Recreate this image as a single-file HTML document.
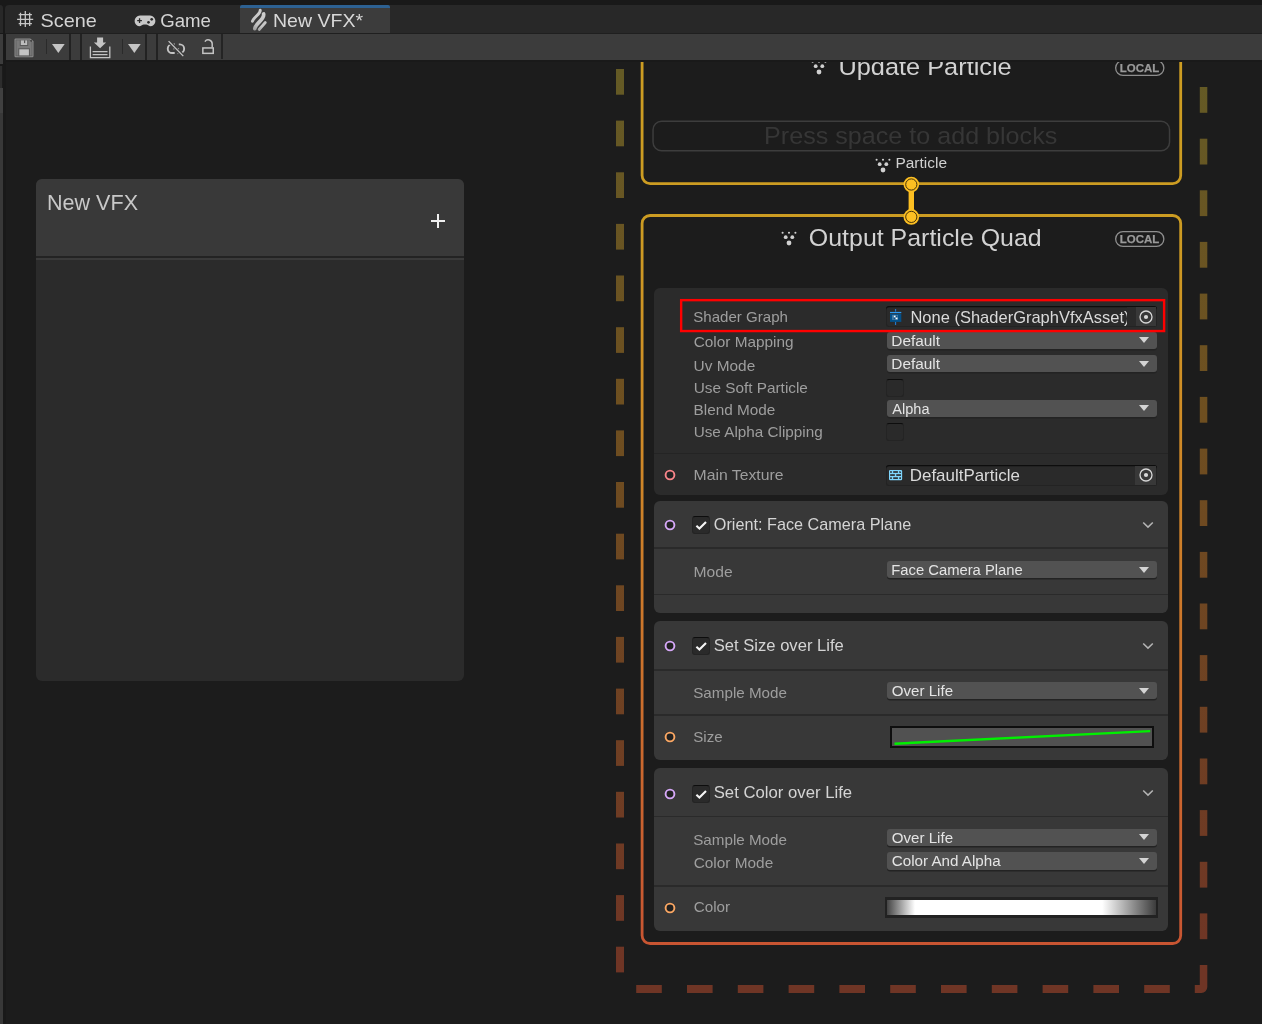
<!DOCTYPE html>
<html><head><meta charset="utf-8"><title>New VFX</title>
<style>
html,body{margin:0;padding:0;}
body{width:1262px;height:1024px;overflow:hidden;background:#1c1c1c;font-family:"Liberation Sans",sans-serif;position:relative;color:#d2d2d2;}
.a{position:absolute;}
.t{position:absolute;left:0;top:0;white-space:pre;line-height:1;transform-origin:0 0;}
.dd{position:absolute;left:886.7px;width:270px;height:17.2px;background:#525252;border-radius:3px;box-shadow:0 1.400px 0 #232323;}
.dd i{position:absolute;right:7.6px;top:5.4px;width:0;height:0;border-left:5.1px solid transparent;border-right:5.1px solid transparent;border-top:6.6px solid #d4d4d4;}
.cb{position:absolute;width:15.8px;height:15.8px;background:#2a2a2a;border:1px solid #242424;border-top-color:#0d0d0d;border-radius:3px;}
.blk{position:absolute;left:653.9px;width:514.4px;background:#383838;border-radius:6px;}
.sep{position:absolute;left:0;width:100%;height:1.6px;background:#2a2a2a;}
.obj{position:absolute;left:886.4px;width:270.3px;height:21.2px;background:#2a2a2a;border-radius:3px;box-shadow:inset 0 1.2px 0 #0d0d0d, inset 0 0 0 1px #232323;overflow:hidden;}
.obj b{position:absolute;right:1px;top:1px;width:21px;height:19.2px;background:#383838;}
</style></head><body>
<div class="a" style="left:0;top:0;width:1262px;height:1024px;overflow:hidden;will-change:transform">

<div class="a" style="left:0;top:0;width:1262px;height:34px;background:#191919"></div>
<div class="a" style="left:0;top:5px;width:3px;height:28px;background:#282828;border-top-right-radius:3px"></div>
<div class="a" style="left:0;top:34px;width:3px;height:30px;background:#3c3c3c"></div>
<div class="a" style="left:0;top:64px;width:3px;height:2px;background:#191919"></div>
<div class="a" style="left:0;top:66px;width:2.2px;height:22px;background:#2d2d2d"></div>
<div class="a" style="left:0;top:88px;width:3px;height:25px;background:#404040"></div>
<div class="a" style="left:0;top:113px;width:3px;height:911px;background:#383838"></div>
<div class="a" style="left:3px;top:34px;width:2.800px;height:990px;background:#191919"></div>
<div class="a" style="left:5px;top:5px;width:1257px;height:27.5px;background:#282828;border-top-left-radius:4px"></div>
<div class="a" style="left:239.7px;top:5px;width:149.9px;height:27.5px;background:#3c3c3c;border-top:3px solid #2d6192;box-sizing:border-box;border-radius:2px 2px 0 0"></div>
<div class="t" style="transform:translate(40.61px,10.78px) scaleX(1.0428);font-size:19.04px;color:#d4d4d4;">Scene</div>
<div class="t" style="transform:translate(160.13px,10.78px) scaleX(0.9794);font-size:19.04px;color:#d4d4d4;">Game</div>
<div class="t" style="transform:translate(273.02px,10.78px) scaleX(1.0254);font-size:19.04px;color:#d8d8d8;">New VFX*</div>
<svg class="a" style="left:16px;top:9px" width="20" height="20" viewBox="16 9 20 20"><g stroke="#c6c6c6" stroke-width="1.300" fill="none">
<path d="M20.500 12.700V25.900M25.300 11.100V27.100M29.650 12.700V25.900M18.700 14.650H31.900M17.100 19.300H33.200M18.700 23.650H31.900"/></g></svg>
<svg class="a" style="left:133px;top:14px" width="24" height="14" viewBox="133 14 24 14"><path fill="#c8c8c8" d="M139.900 15.600H150.100A5.300 5.300 0 0 1 155.400 20.900A5.300 5.300 0 0 1 150.100 26.200C148.500 26.200 147.800 24.600 146.200 24.600H143.800C142.200 24.600 141.500 26.200 139.900 26.200A5.300 5.300 0 0 1 134.600 20.900A5.300 5.300 0 0 1 139.900 15.600z"/>
<path stroke="#2a2a2a" stroke-width="1.300" d="M139.550 18.200v4.700M137.200 20.550h4.700"/><circle cx="151.700" cy="19.300" r="1.350" fill="#2a2a2a"/><circle cx="148.500" cy="22.300" r="1.350" fill="#2a2a2a"/></svg>
<svg class="a" style="left:248px;top:6px" width="22" height="27" viewBox="248 6 22 27"><defs><linearGradient id="fg" gradientUnits="userSpaceOnUse" x1="262" y1="9" x2="253" y2="30"><stop offset="0" stop-color="#d0d0d0"/><stop offset="0.7" stop-color="#c4c4c4"/><stop offset="1" stop-color="#9a9a9a"/></linearGradient></defs>
<g fill="none" stroke="url(#fg)" stroke-linecap="round"><path d="M260.200 10.300C260.600 14.200 253.600 17 252.500 21.200" stroke-width="3"/><path d="M263.600 14C264.800 19.500 255.600 23 254.800 28.600" stroke-width="3.700"/><path d="M265.300 22.500L259.200 29.500" stroke-width="2.800"/></g></svg>
<div class="a" style="left:5px;top:32.5px;width:1257px;height:1.5px;background:#1f1f1f"></div>
<div class="a" style="left:6px;top:34px;width:1256px;height:26px;background:#3c3c3c"></div>
<div class="a" style="left:5.5px;top:60px;width:1257px;height:2px;background:#191919"></div>
<div class="a" style="left:69px;top:34px;width:2px;height:26px;background:#222"></div>
<div class="a" style="left:80.2px;top:34px;width:2px;height:26px;background:#222"></div>
<div class="a" style="left:145px;top:34px;width:2px;height:26px;background:#222"></div>
<div class="a" style="left:156px;top:34px;width:2px;height:26px;background:#222"></div>
<div class="a" style="left:221.2px;top:34px;width:1.6px;height:24.8px;background:#242424"></div>
<div class="a" style="left:46.2px;top:39.2px;width:1px;height:14.6px;background:#2a2a2a"></div>
<div class="a" style="left:122.2px;top:39.2px;width:1px;height:14.6px;background:#2a2a2a"></div>
<svg class="a" style="left:51.7px;top:43.9px" width="13" height="10" viewBox="0 0 13 10"><path fill="#c4c4c4" d="M0 0H12.700L6.350 9.100z"/></svg>
<svg class="a" style="left:127.6px;top:43.9px" width="13" height="10" viewBox="0 0 13 10"><path fill="#c4c4c4" d="M0 0H12.700L6.350 9.100z"/></svg>
<svg class="a" style="left:14px;top:38px" width="20" height="20" viewBox="14 38 20 20"><path d="M15.700 38.400H30.300L33.500 41.300V56.100a1.200 1.200 0 0 1-1.200 1.200H15.700a1.200 1.200 0 0 1-1.200-1.200V39.600a1.200 1.200 0 0 1 1.200-1.200z" fill="#8c8c8c"/>
<path d="M15.500 39.400H29.900L32.500 41.800V56.300H15.500z" fill="#5e5e5e"/><path d="M16.400 40.300H29.500L31.600 42.200V55.400H16.400z" fill="#797979"/>
<rect x="19.800" y="40.300" width="8.400" height="5.700" fill="#595959"/><rect x="20.800" y="40.400" width="6.400" height="4.600" fill="#bdbdbd"/><rect x="24.100" y="40.300" width="1.100" height="2.800" fill="#4a4a4a"/>
<rect x="18.300" y="48.300" width="11.600" height="8" fill="#595959"/><rect x="19.300" y="49.300" width="9.600" height="6.100" fill="#c4c4c4"/><rect x="30.400" y="40.300" width="1.600" height="1.100" fill="#2e2e2e"/></svg>
<svg class="a" style="left:88px;top:36px" width="24" height="24" viewBox="0 0 24 24"><g fill="none" stroke="#c4c4c4" stroke-width="1.300"><path d="M2.400 10.600V21.600H21.800V10.600"/><path d="M4.600 15.700H19.500M4.600 18.600H19.500"/></g>
<path fill="#c4c4c4" d="M9.100 1.600H15.100V6.400H18.100L12.100 12.200L5.900 6.400H9.100z"/></svg>
<svg class="a" style="left:164px;top:38px" width="24" height="20" viewBox="164 38 24 20"><g fill="none" stroke="#c4c4c4" stroke-linecap="butt">
<path d="M174.700 44.350H172.100a4.350 4.350 0 0 0 0 8.700H174.700" stroke-width="1.900"/><path d="M178.800 44.350H179.800a4.350 4.350 0 0 1 0 8.700H179.300" stroke-width="1.900"/><path d="M167.900 40.400L184 56.800" stroke="#3c3c3c" stroke-width="3.800"/><path d="M168.600 41.100L183.300 56.100" stroke-width="1.350"/></g>
<g fill="#8c8c8c"><rect x="173.200" y="48.300" width="1.300" height="1.300"/><rect x="177.800" y="48" width="1.300" height="1.300"/><rect x="174" y="43.500" width="1" height="1"/><rect x="177.300" y="53.100" width="1" height="1"/></g></svg>
<svg class="a" style="left:200px;top:37px" width="17" height="19" viewBox="200 37 17 19"><g fill="none" stroke="#c4c4c4" stroke-width="1.500"><rect x="202.850" y="47.950" width="10.400" height="5.400"/><path d="M204.900 41.600A4 4 0 0 1 212.200 43.850V47.500"/></g></svg>
<div class="a" style="left:36px;top:179px;width:428px;height:502px;background:#2b2b2b;border-radius:6px;overflow:hidden"><div class="a" style="left:0;top:0;width:428px;height:77px;background:#393939"></div><div class="a" style="left:0;top:77px;width:428px;height:2px;background:#232323"></div><div class="a" style="left:0;top:79px;width:428px;height:2px;background:#3a3a3a"></div></div>
<div class="t" style="transform:translate(46.94px,191.08px) scaleX(0.9456);font-size:22.82px;color:#c8c8c8;">New VFX</div>
<div class="a" style="left:430.5px;top:220px;width:14px;height:2px;background:#efefef"></div><div class="a" style="left:436.5px;top:214px;width:2px;height:14px;background:#efefef"></div>
<div class="a" style="left:0;top:62px;width:1262px;height:962px;overflow:hidden"><div class="a" style="left:0;top:-62px;width:1262px;height:1024px">
<svg class="a" style="left:0;top:0" width="1262" height="1024" viewBox="0 0 1262 1024">
<defs><linearGradient id="dg" gradientUnits="userSpaceOnUse" x1="0" y1="80" x2="0" y2="960"><stop offset="0" stop-color="#645a25"/><stop offset="0.375" stop-color="#6e4f20"/><stop offset="1" stop-color="#6f3525"/></linearGradient>
<linearGradient id="cg" gradientUnits="userSpaceOnUse" x1="0" y1="214" x2="0" y2="945"><stop offset="0" stop-color="#cc9c22"/><stop offset="0.28" stop-color="#cf8c27"/><stop offset="1" stop-color="#c85532"/></linearGradient></defs>
<g fill="url(#dg)">
<rect x="616" y="69.0" width="8" height="25.7"/>
<rect x="616" y="120.6" width="8" height="25.7"/>
<rect x="616" y="172.3" width="8" height="25.7"/>
<rect x="616" y="223.9" width="8" height="25.7"/>
<rect x="616" y="275.5" width="8" height="25.7"/>
<rect x="616" y="327.2" width="8" height="25.7"/>
<rect x="616" y="378.8" width="8" height="25.7"/>
<rect x="616" y="430.4" width="8" height="25.7"/>
<rect x="616" y="482.0" width="8" height="25.7"/>
<rect x="616" y="533.7" width="8" height="25.7"/>
<rect x="616" y="585.3" width="8" height="25.7"/>
<rect x="616" y="636.9" width="8" height="25.7"/>
<rect x="616" y="688.6" width="8" height="25.7"/>
<rect x="616" y="740.2" width="8" height="25.7"/>
<rect x="616" y="791.8" width="8" height="25.7"/>
<rect x="616" y="843.5" width="8" height="25.7"/>
<rect x="616" y="895.1" width="8" height="25.7"/>
<rect x="616" y="946.7" width="8" height="25.7"/>
<rect x="1199.8" y="87.0" width="7.5" height="25.8"/>
<rect x="1199.8" y="138.7" width="7.5" height="25.8"/>
<rect x="1199.8" y="190.3" width="7.5" height="25.8"/>
<rect x="1199.8" y="241.9" width="7.5" height="25.8"/>
<rect x="1199.8" y="293.6" width="7.5" height="25.8"/>
<rect x="1199.8" y="345.2" width="7.5" height="25.8"/>
<rect x="1199.8" y="396.9" width="7.5" height="25.8"/>
<rect x="1199.8" y="448.6" width="7.5" height="25.8"/>
<rect x="1199.8" y="500.2" width="7.5" height="25.8"/>
<rect x="1199.8" y="551.9" width="7.5" height="25.8"/>
<rect x="1199.8" y="603.5" width="7.5" height="25.8"/>
<rect x="1199.8" y="655.1" width="7.5" height="25.8"/>
<rect x="1199.8" y="706.8" width="7.5" height="25.8"/>
<rect x="1199.8" y="758.5" width="7.5" height="25.8"/>
<rect x="1199.8" y="810.1" width="7.5" height="25.8"/>
<rect x="1199.8" y="861.8" width="7.5" height="25.8"/>
<rect x="1199.8" y="913.4" width="7.5" height="25.8"/>
<path d="M1199.8 965H1207.3V987a6 6 0 0 1-6 6H1194.8V985H1199.8z"/>
<rect x="636.2" y="985" width="25.6" height="8"/>
<rect x="687.0" y="985" width="25.6" height="8"/>
<rect x="737.8" y="985" width="25.6" height="8"/>
<rect x="788.6" y="985" width="25.6" height="8"/>
<rect x="839.4" y="985" width="25.6" height="8"/>
<rect x="890.2" y="985" width="25.6" height="8"/>
<rect x="941.0" y="985" width="25.6" height="8"/>
<rect x="991.8" y="985" width="25.6" height="8"/>
<rect x="1042.6" y="985" width="25.6" height="8"/>
<rect x="1093.4" y="985" width="25.6" height="8"/>
<rect x="1144.2" y="985" width="25.6" height="8"/>
</g>
<rect x="642.1" y="40" width="538.6" height="143.6" rx="8" fill="none" stroke="#cc9c22" stroke-width="2.800"/>
<rect x="642.1" y="215.500" width="538.6" height="728" rx="8" fill="none" stroke="url(#cg)" stroke-width="2.800"/>
<rect x="908.6" y="185" width="5.400" height="32" fill="#fcbf22"/>
<circle cx="911.3" cy="184.5" r="7.800" fill="#fcbf22"/><circle cx="911.3" cy="184.5" r="5.600" fill="none" stroke="#45320a" stroke-width="1"/>
<circle cx="911.3" cy="216.9" r="7.800" fill="#fcbf22"/><circle cx="911.3" cy="216.9" r="5.600" fill="none" stroke="#45320a" stroke-width="1"/>
</svg>
<svg class="a" style="left:780.7px;top:230.8px" width="16.0" height="16.0" viewBox="0 0 16 16"><g fill="#d0d0d0"><circle cx="1.600" cy="1.700" r="1.050"/><circle cx="8" cy="1.700" r="1.050"/><circle cx="14.400" cy="1.700" r="1.050"/><circle cx="4.700" cy="6.200" r="1.900"/><circle cx="11.300" cy="6.200" r="1.900"/><circle cx="8" cy="12" r="2.400"/></g></svg>
<svg class="a" style="left:810.7px;top:59.8px" width="16.0" height="16.0" viewBox="0 0 16 16"><g fill="#d0d0d0"><circle cx="1.600" cy="1.700" r="1.050"/><circle cx="8" cy="1.700" r="1.050"/><circle cx="14.400" cy="1.700" r="1.050"/><circle cx="4.700" cy="6.200" r="1.900"/><circle cx="11.300" cy="6.200" r="1.900"/><circle cx="8" cy="12" r="2.400"/></g></svg>
<svg class="a" style="left:875.4px;top:157.8px" width="16.0" height="16.0" viewBox="0 0 16 16"><g fill="#d0d0d0"><circle cx="1.600" cy="1.700" r="1.050"/><circle cx="8" cy="1.700" r="1.050"/><circle cx="14.400" cy="1.700" r="1.050"/><circle cx="4.700" cy="6.200" r="1.900"/><circle cx="11.300" cy="6.200" r="1.900"/><circle cx="8" cy="12" r="2.400"/></g></svg>
<div class="t" style="transform:translate(838.40px,55.54px) scaleX(1.0970);font-size:23.11px;color:#d2d2d2;">Update Particle</div>
<div class="t" style="transform:translate(808.85px,226.61px) scaleX(1.0788);font-size:23.11px;color:#d2d2d2;">Output Particle Quad</div>
<div class="t" style="transform:translate(895.43px,156.01px) scaleX(1.0866);font-size:14.24px;color:#d0d0d0;">Particle</div>
<svg class="a" style="left:1113px;top:228.8px" width="54" height="20" viewBox="0 0 54 20"><rect x="2.650" y="2.650" width="48.200" height="14.700" rx="7.350" fill="none" stroke="#8e8e8e" stroke-width="1.300"/></svg>
<div class="t" style="transform:translate(1119.78px,232.93px) scaleX(0.9748);font-size:11.77px;font-weight:bold;color:#9a9a9a;-webkit-text-stroke:0.250px #9a9a9a;">LOCAL</div>
<svg class="a" style="left:1113px;top:57.9px" width="54" height="20" viewBox="0 0 54 20"><rect x="2.650" y="2.650" width="48.200" height="14.700" rx="7.350" fill="none" stroke="#8e8e8e" stroke-width="1.300"/></svg>
<div class="t" style="transform:translate(1119.78px,62.03px) scaleX(0.9748);font-size:11.77px;font-weight:bold;color:#9a9a9a;-webkit-text-stroke:0.250px #9a9a9a;">LOCAL</div>
<svg class="a" style="left:650px;top:118px" width="524" height="36" viewBox="650 118 524 36"><rect x="653.050" y="121.250" width="516.500" height="29.500" rx="8.500" fill="none" stroke="#3d3d3d" stroke-width="1.500"/></svg>
<div class="t" style="transform:translate(764.12px,124.56px) scaleX(1.0867);font-size:23.11px;color:#363636;">Press space to add blocks</div>
<div class="blk" style="top:288.3px;height:207.1px;background:#2b2b2b"><div class="sep" style="top:164.300px;height:1.400px;background:#242424"></div></div>
<div class="obj" style="top:306.1px"><b></b></div>
<div class="t" style="transform:translate(910.46px,309.52px) scaleX(0.9956);font-size:16.57px;color:#dadada;">None (ShaderGraphVfxAsset)</div>
<div class="a" style="left:1127.2px;top:307.4px;width:8.500px;height:18.800px;background:#2a2a2a"></div>
<svg class="a" style="left:1139.1px;top:310.0px" width="14" height="14" viewBox="0 0 14 14"><circle cx="7" cy="7" r="6" fill="none" stroke="#d8d8d8" stroke-width="1.300"/><circle cx="7" cy="7" r="2.100" fill="#d8d8d8"/></svg>
<svg class="a" style="left:888px;top:308px" width="15" height="18" viewBox="888 308 15 18"><path d="M895.550 309V311.600" stroke="#2a78c8" stroke-width="1.200"/><path d="M895.550 321.500V325" stroke="#2277cc" stroke-width="1.200"/><rect x="890" y="311.900" width="11.300" height="1.300" fill="#2b9af3"/><rect x="890" y="314" width="11.300" height="7.900" fill="#045088"/><rect x="892.100" y="314.900" width="5.900" height="5" fill="#4a80aa"/><rect x="893.900" y="315.700" width="1.700" height="1.600" fill="#fff"/><rect x="895.600" y="317.600" width="1.800" height="1.600" fill="#fff"/><rect x="895.800" y="315.700" width="1.500" height="1.500" fill="#0a4a80"/><rect x="893.700" y="317.700" width="1.500" height="1.500" fill="#0a4a80"/></svg>
<div class="t" style="transform:translate(693.27px,309.48px) scaleX(0.9972);font-size:15.12px;color:#9e9e9e;">Shader Graph</div>
<div class="t" style="transform:translate(693.66px,334.45px) scaleX(1.0165);font-size:15.12px;color:#9e9e9e;">Color Mapping</div>
<div class="t" style="transform:translate(693.62px,358.20px) scaleX(1.0188);font-size:15.12px;color:#9e9e9e;">Uv Mode</div>
<div class="t" style="transform:translate(693.65px,380.00px) scaleX(1.0153);font-size:15.12px;color:#9e9e9e;">Use Soft Particle</div>
<div class="t" style="transform:translate(693.53px,402.20px) scaleX(1.0148);font-size:15.12px;color:#9e9e9e;">Blend Mode</div>
<div class="t" style="transform:translate(693.67px,424.00px) scaleX(1.0106);font-size:15.12px;color:#9e9e9e;">Use Alpha Clipping</div>
<div class="dd" style="top:331.6px;height:17.2px"><i></i></div>
<div class="t" style="transform:translate(891.28px,333.54px) scaleX(1.0707);font-size:14.39px;color:#e4e4e4;">Default</div>
<div class="dd" style="top:355.2px;height:17.2px"><i></i></div>
<div class="t" style="transform:translate(891.28px,357.02px) scaleX(1.0707);font-size:14.39px;color:#e4e4e4;">Default</div>
<div class="dd" style="top:399.7px;height:17.2px"><i></i></div>
<div class="t" style="transform:translate(892.31px,401.52px) scaleX(1.0105);font-size:14.39px;color:#e4e4e4;">Alpha</div>
<div class="cb" style="left:886px;top:379px"></div>
<div class="cb" style="left:886px;top:423.4px"></div>
<svg class="a" style="left:678px;top:297px" width="490" height="38" viewBox="678 297 490 38"><rect x="681.150" y="300.150" width="482.950" height="30.900" fill="none" stroke="#ff0000" stroke-width="2.400"/></svg>
<svg class="a" style="left:662.70px;top:468.10px" width="14" height="14" viewBox="0 0 14 14"><circle cx="7" cy="7" r="4.400" fill="#212121" stroke="#f9858a" stroke-width="1.900"/></svg>
<div class="t" style="transform:translate(693.58px,467.43px) scaleX(1.0430);font-size:15.12px;color:#9e9e9e;">Main Texture</div>
<div class="obj" style="top:464.5px"><b></b></div>
<div class="t" style="transform:translate(909.74px,467.57px) scaleX(1.0222);font-size:16.57px;color:#dadada;">DefaultParticle</div>
<svg class="a" style="left:1139.1px;top:468.2px" width="14" height="14" viewBox="0 0 14 14"><circle cx="7" cy="7" r="6" fill="none" stroke="#d8d8d8" stroke-width="1.300"/><circle cx="7" cy="7" r="2.100" fill="#d8d8d8"/></svg>
<svg class="a" style="left:888px;top:469px" width="16" height="12" viewBox="888 469 16 12"><rect x="889" y="469.900" width="13.150" height="10.250" rx="1.200" fill="#7fd6fd"/><g fill="#1a0c08"><rect x="890.150" y="471.300" width="1.650" height="1.400"/><rect x="893.200" y="471.300" width="4.700" height="1.400"/><path d="M899.300 471.300H900.200L901.050 472.150V472.700H899.300z"/><rect x="890.150" y="474.350" width="4.700" height="1.400"/><rect x="896.250" y="474.350" width="4.700" height="1.400"/><rect x="890.150" y="477.400" width="1.650" height="1.400"/><rect x="893.200" y="477.400" width="4.700" height="1.400"/><rect x="899.300" y="477.400" width="1.650" height="1.400"/></g></svg>
<div class="blk" style="top:500.6px;height:112.4px"><div class="sep" style="top:46.400px"></div><div class="sep" style="top:93px"></div></div>
<svg class="a" style="left:662.70px;top:517.80px" width="14" height="14" viewBox="0 0 14 14"><circle cx="7" cy="7" r="4.400" fill="#212121" stroke="#d6a8f8" stroke-width="1.900"/></svg>
<div class="cb" style="left:692.2px;top:516.1px"><svg class="a" style="left:0.900px;top:0.900px" width="14" height="14" viewBox="0 0 14 14"><path d="M2.400 7.700L5.400 10.500L12 3.900" fill="none" stroke="#f4f4f4" stroke-width="2.100"/></svg></div>
<div class="t" style="transform:translate(713.87px,516.54px) scaleX(1.0140);font-size:15.99px;color:#d4d4d4;">Orient: Face Camera Plane</div>
<svg class="a" style="left:1141.6px;top:521px" width="12" height="8" viewBox="0 0 12 8"><path d="M1.200 1.500L6 6.100L10.800 1.500" fill="none" stroke="#b4b4b4" stroke-width="1.500"/></svg>
<div class="t" style="transform:translate(693.59px,564.10px) scaleX(1.0352);font-size:15.12px;color:#9e9e9e;">Mode</div>
<div class="dd" style="top:561.3px;height:17.2px"><i></i></div>
<div class="t" style="transform:translate(891.24px,563.12px) scaleX(1.0290);font-size:14.39px;color:#e4e4e4;">Face Camera Plane</div>
<div class="blk" style="top:621.1px;height:139.1px"><div class="sep" style="top:47.900px"></div><div class="sep" style="top:93.400px"></div></div>
<svg class="a" style="left:662.70px;top:638.90px" width="14" height="14" viewBox="0 0 14 14"><circle cx="7" cy="7" r="4.400" fill="#212121" stroke="#d6a8f8" stroke-width="1.900"/></svg>
<div class="cb" style="left:692.2px;top:637.2px"><svg class="a" style="left:0.900px;top:0.900px" width="14" height="14" viewBox="0 0 14 14"><path d="M2.400 7.700L5.400 10.500L12 3.900" fill="none" stroke="#f4f4f4" stroke-width="2.100"/></svg></div>
<div class="t" style="transform:translate(713.72px,637.62px) scaleX(1.0382);font-size:15.99px;color:#d4d4d4;">Set Size over Life</div>
<svg class="a" style="left:1141.6px;top:642px" width="12" height="8" viewBox="0 0 12 8"><path d="M1.200 1.500L6 6.100L10.800 1.500" fill="none" stroke="#b4b4b4" stroke-width="1.500"/></svg>
<div class="t" style="transform:translate(693.24px,685.05px) scaleX(1.0054);font-size:15.12px;color:#9e9e9e;">Sample Mode</div>
<div class="dd" style="top:682.2px;height:17.2px"><i></i></div>
<div class="t" style="transform:translate(891.82px,684.02px) scaleX(1.0500);font-size:14.39px;color:#e4e4e4;">Over Life</div>
<svg class="a" style="left:662.70px;top:729.95px" width="14" height="14" viewBox="0 0 14 14"><circle cx="7" cy="7" r="4.400" fill="#212121" stroke="#fba763" stroke-width="1.900"/></svg>
<div class="t" style="transform:translate(693.26px,729.20px) scaleX(0.9999);font-size:15.12px;color:#9e9e9e;">Size</div>
<div class="a" style="left:889.5px;top:725.9px;width:264.5px;height:22.3px;background:#0e0e0e"></div><div class="a" style="left:892px;top:728.4px;width:259.5px;height:17.300px;background:#515151"></div>
<svg class="a" style="left:889.5px;top:725.9px" width="265" height="23" viewBox="0 0 265 23"><path d="M4.500 17.700L260.200 5.100" stroke="#00f000" stroke-width="2.400" fill="none"/></svg>
<div class="blk" style="top:768.3px;height:162.3px"><div class="sep" style="top:47.400px"></div><div class="sep" style="top:116.700px"></div></div>
<svg class="a" style="left:662.70px;top:787.30px" width="14" height="14" viewBox="0 0 14 14"><circle cx="7" cy="7" r="4.400" fill="#212121" stroke="#d6a8f8" stroke-width="1.900"/></svg>
<div class="cb" style="left:692.2px;top:785px"><svg class="a" style="left:0.900px;top:0.900px" width="14" height="14" viewBox="0 0 14 14"><path d="M2.400 7.700L5.400 10.500L12 3.900" fill="none" stroke="#f4f4f4" stroke-width="2.100"/></svg></div>
<div class="t" style="transform:translate(713.70px,784.52px) scaleX(1.0456);font-size:15.99px;color:#d4d4d4;">Set Color over Life</div>
<svg class="a" style="left:1141.6px;top:789px" width="12" height="8" viewBox="0 0 12 8"><path d="M1.200 1.500L6 6.100L10.800 1.500" fill="none" stroke="#b4b4b4" stroke-width="1.500"/></svg>
<div class="t" style="transform:translate(693.24px,832.30px) scaleX(1.0054);font-size:15.12px;color:#9e9e9e;">Sample Mode</div>
<div class="t" style="transform:translate(693.66px,855.20px) scaleX(1.0190);font-size:15.12px;color:#9e9e9e;">Color Mode</div>
<div class="dd" style="top:828.6px;height:17.2px"><i></i></div>
<div class="t" style="transform:translate(891.82px,830.54px) scaleX(1.0500);font-size:14.39px;color:#e4e4e4;">Over Life</div>
<div class="dd" style="top:852.4px;height:17.2px"><i></i></div>
<div class="t" style="transform:translate(891.73px,854.22px) scaleX(1.0570);font-size:14.39px;color:#e4e4e4;">Color And Alpha</div>
<svg class="a" style="left:662.70px;top:900.50px" width="14" height="14" viewBox="0 0 14 14"><circle cx="7" cy="7" r="4.400" fill="#212121" stroke="#fba763" stroke-width="1.900"/></svg>
<div class="t" style="transform:translate(693.69px,899.43px) scaleX(1.0069);font-size:15.12px;color:#9e9e9e;">Color</div>
<div class="a" style="left:885.100px;top:897px;width:272.750px;height:20.700px;background:#222"></div>
<div class="a" style="left:887.100px;top:900px;width:269.400px;height:15.200px;background:linear-gradient(90deg,#444 0%,#fff 10.400%,#fff 80%,#3c3c3c 100%)"></div>
</div></div>
</div>
</body></html>
